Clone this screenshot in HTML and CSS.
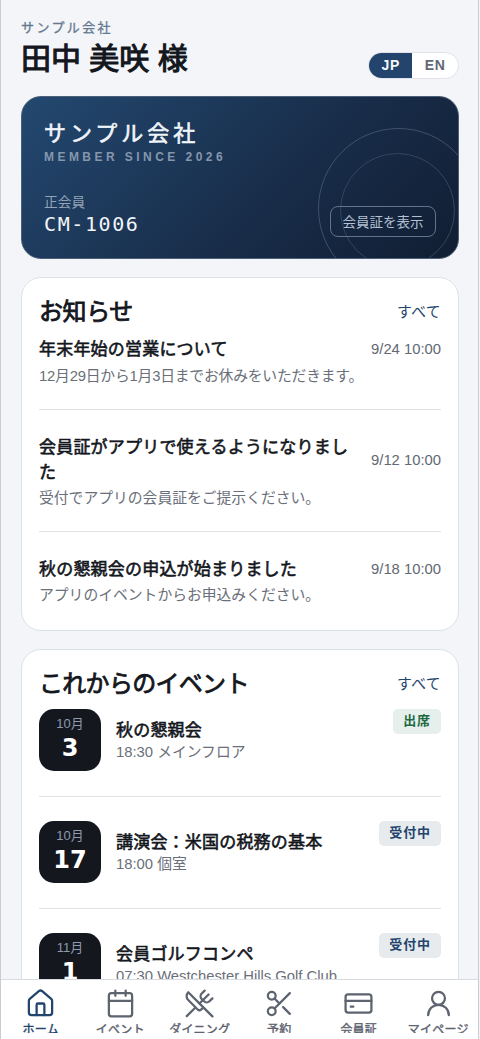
FILE: index.html
```html
<!DOCTYPE html>
<html lang="ja">
<head>
<meta charset="utf-8">
<meta name="viewport" content="width=device-width, initial-scale=1">
<title>サンプル会社</title>
<link rel="stylesheet" href="styles.css">
</head>
<body>
<div class="app">
  <main class="content">
    <header class="header">
      <div>
        <div class="company">サンプル会社</div>
        <h1 class="greeting">田中 美咲 様</h1>
      </div>
      <div class="lang"><span class="lang-item active">JP</span><span class="lang-item">EN</span></div>
    </header>

    <section class="member-card">
      <div class="ring ring-outer"></div>
      <div class="ring ring-inner"></div>
      <div>
        <div class="card-title">サンプル会社</div>
        <div class="card-since">MEMBER SINCE 2026</div>
      </div>
      <div class="card-bottom">
        <div>
          <div class="card-type">正会員</div>
          <div class="card-number">CM-1006</div>
        </div>
        <button class="card-button">会員証を表示</button>
      </div>
    </section>

    <section class="panel">
      <div class="panel-head"><h2>お知らせ</h2><a class="all">すべて</a></div>
      <article class="news">
        <div class="news-top"><h3>年末年始の営業について</h3><time>9/24 10:00</time></div>
        <p>12月29日から1月3日までお休みをいただきます。</p>
      </article>
      <article class="news">
        <div class="news-top"><h3>会員証がアプリで使えるようになりました</h3><time>9/12 10:00</time></div>
        <p>受付でアプリの会員証をご提示ください。</p>
      </article>
      <article class="news">
        <div class="news-top"><h3>秋の懇親会の申込が始まりました</h3><time>9/18 10:00</time></div>
        <p>アプリのイベントからお申込みください。</p>
      </article>
    </section>

    <section class="panel">
      <div class="panel-head"><h2 class="tight">これからのイベント</h2><a class="all">すべて</a></div>
      <article class="event">
        <div class="date"><span class="month">10月</span><span class="day">3</span></div>
        <div class="event-body"><h3>秋の懇親会</h3><p>18:30 メインフロア</p></div>
        <span class="badge going">出席</span>
      </article>
      <article class="event">
        <div class="date"><span class="month">10月</span><span class="day">17</span></div>
        <div class="event-body"><h3>講演会：米国の税務の基本</h3><p>18:00 個室</p></div>
        <span class="badge">受付中</span>
      </article>
      <article class="event">
        <div class="date"><span class="month">11月</span><span class="day">1</span></div>
        <div class="event-body"><h3>会員ゴルフコンペ</h3><p>07:30 Westchester Hills Golf Club</p></div>
        <span class="badge">受付中</span>
      </article>
    </section>
  </main>

  <nav class="tabs">
    <a class="tab active">
      <svg viewBox="0 0 24 24"><path d="M15 21v-8a1 1 0 0 0-1-1h-4a1 1 0 0 0-1 1v8"/><path d="M3 10a2 2 0 0 1 .709-1.528l7-5.999a2 2 0 0 1 2.582 0l7 5.999A2 2 0 0 1 21 10v9a2 2 0 0 1-2 2H5a2 2 0 0 1-2-2z"/></svg>
      <span>ホーム</span>
    </a>
    <a class="tab">
      <svg viewBox="0 0 24 24"><path d="M8 2v4M16 2v4"/><rect x="3" y="4" width="18" height="18" rx="2"/><path d="M3 10h18"/></svg>
      <span>イベント</span>
    </a>
    <a class="tab">
      <svg viewBox="0 0 24 24"><path d="m16 2-2.3 2.3a3 3 0 0 0 0 4.2l1.8 1.8a3 3 0 0 0 4.2 0L22 8"/><path d="M15 15 3.3 3.3a4.2 4.2 0 0 0 0 6l7.3 7.3c.7.7 2 .7 2.8 0L15 15Zm0 0 7 7"/><path d="m2.1 21.8 6.4-6.3"/><path d="m19 5-7 7"/></svg>
      <span>ダイニング</span>
    </a>
    <a class="tab">
      <svg viewBox="0 0 24 24"><circle cx="6" cy="6" r="3"/><path d="M8.12 8.12 12 12"/><path d="M20 4 8.12 15.88"/><circle cx="6" cy="18" r="3"/><path d="M14.8 14.8 20 20"/></svg>
      <span>予約</span>
    </a>
    <a class="tab">
      <svg viewBox="0 0 24 24"><rect x="2" y="5" width="20" height="14" rx="2"/><path d="M2 10h20M6 14.5h2"/></svg>
      <span>会員証</span>
    </a>
    <a class="tab">
      <svg viewBox="0 0 24 24"><circle cx="12" cy="8" r="5"/><path d="M20 21a8 8 0 0 0-16 0"/></svg>
      <span>マイページ</span>
    </a>
  </nav>
</div>
</body>
</html>
```
FILE: styles.css
```css
* { box-sizing: border-box; }
body {
  margin: 0;
  background: #f3f5f8;
  font-family: "Liberation Sans", "Noto Sans CJK JP", sans-serif;
  color: #14171d;
}
h1, h2, h3, p { margin: 0; }

.app {
  display: flex;
  flex-direction: column;
  width: 479px;
  height: 1039px;
  overflow: hidden;
  border: solid #c9ccd3;
  border-width: 0 1px;
}
.content {
  flex: 1;
  min-height: 0;
  overflow: hidden;
  display: flex;
  flex-direction: column;
  gap: 18px;
  padding: 18px 19px 0 20px;
}
.content > * { flex-shrink: 0; }

.header { display: flex; justify-content: space-between; align-items: flex-start; height: 60px; }
.company { font-size: 13px; line-height: 20px; letter-spacing: 2.4px; color: #64798f; -webkit-text-stroke: .3px; }
.greeting { font-size: 30px; line-height: 42px; font-weight: 400; -webkit-text-stroke: 1.1px; }
.lang { display: flex; height: 27px; width: 91px; margin-top: 34px; border: 1px solid #dfe2e8; border-radius: 14px; overflow: hidden; background: #fff; }
.lang-item { flex: 1 0 auto; text-align: center; font-size: 14px; font-weight: 700; line-height: 24px; letter-spacing: .7px; color: #626874; }
.lang-item.active { background: #23446d; color: #f4f7fb; }

.member-card {
  position: relative;
  height: 163px;
  padding: 22px 22px 21px;
  border: 1px solid #4b5f78;
  border-radius: 20px;
  overflow: hidden;
  background: linear-gradient(135deg, #234870 0%, #182c48 60%, #111e33 100%);
  color: #f1f5fa;
  display: flex;
  flex-direction: column;
  justify-content: space-between;
}
.ring { position: absolute; border: 1px solid #40526b; border-radius: 50%; }
.ring-outer { width: 161px; height: 161px; right: -21px; bottom: -31px; }
.ring-inner { width: 115px; height: 115px; right: 3px; bottom: -10px; border-color: #34465f; }
.card-title { font-size: 22px; line-height: 30px; letter-spacing: 3.96px; -webkit-text-stroke: .6px; }
.card-since { font-size: 12px; line-height: 16px; letter-spacing: 3.45px; font-weight: 700; color: #8597ad; }
.card-bottom { display: flex; justify-content: space-between; align-items: flex-end; }
.card-type { font-size: 13.7px; line-height: 19px; color: #93a3b6; }
.card-number { font-family: "DejaVu Sans Mono", monospace; font-size: 20px; line-height: 25px; letter-spacing: 1.6px; }
.card-button {
  position: relative;
  width: 106px;
  height: 31px;
  padding: 0 0 2px;
  border: 1px solid #62748c;
  border-radius: 8px;
  background: none;
  color: #b3c1d2;
  font: 13.5px "Liberation Sans", "Noto Sans CJK JP", sans-serif;
}

.panel { padding: 17px 17px; border: 1px solid #dde1e8; border-radius: 20px; background: #fff; }
.panel-head { display: flex; justify-content: space-between; align-items: center; height: 33px; }
.panel-head h2 { font-size: 24px; line-height: 32px; letter-spacing: -.4px; font-weight: 400; -webkit-text-stroke: .8px; }
.panel-head .tight { letter-spacing: -.7px; }
.all { font-size: 14.8px; line-height: 20px; letter-spacing: .4px; color: #23446d; }

.news { padding: 25px 0 21px; border-top: 1px solid #dfe2e7; }
.panel-head + .news { padding: 9px 0 21px; border-top: 0; }
.news:last-child { padding-bottom: 6px; }
.news-top { display: flex; justify-content: space-between; align-items: center; gap: 16px; }
h3 { font-size: 17px; line-height: 25px; letter-spacing: .2px; font-weight: 400; -webkit-text-stroke: .6px; }
time { font-size: 14.8px; line-height: 18px; padding-bottom: 1px; color: #626874; white-space: nowrap; }
.news p { font-size: 14.8px; line-height: 23px; margin-top: 2px; color: #6a6f79; }
.panel-head + .news p { margin-top: 3px; letter-spacing: -.2px; }

.event { display: flex; align-items: flex-start; gap: 15px; padding: 24px 0 25px; border-top: 1px solid #dfe2e7; }
.panel-head + .event { padding-top: 9px; border-top: 0; }
.date {
  width: 62px;
  height: 62px;
  border-radius: 15px;
  background: #14171d;
  display: flex;
  flex-direction: column;
  align-items: center;
  padding-top: 5px;
}
.month { font-size: 13px; line-height: 19px; color: #8d9ab0; }
.day { font-family: "DejaVu Sans", sans-serif; font-size: 24px; line-height: 30px; font-weight: 700; color: #fff; }
.event-body { flex: 1; padding-top: 9px; }
.event-body h3 { line-height: 25px; }
.event-body p { font-size: 14.8px; line-height: 19px; color: #6a6f79; white-space: nowrap; }
.badge { height: 25px; padding: 0 10px; border-radius: 5px; background: #e8ebee; color: #23446d; font-size: 13px; line-height: 24px; font-weight: 700; letter-spacing: .9px; }
.badge.going { background: #e6efeb; color: #216a43; }

.tabs {
  flex: none;
  display: grid;
  grid-template-columns: repeat(6, 1fr);
  height: 60px;
  padding-top: 8px;
  background: #fff;
  border-top: 1px solid #d8dbe1;
}
.tab { display: flex; flex-direction: column; align-items: center; height: 45px; overflow: hidden; color: #5d636f; }
.tab.active { color: #23446d; }
.tab svg { flex: none; width: 31px; height: 31px; fill: none; stroke: currentColor; stroke-width: 1.75; stroke-linecap: round; stroke-linejoin: round; }
.tab span { margin-top: 2px; font-size: 12px; line-height: 18px; letter-spacing: .24px; -webkit-text-stroke: .4px; white-space: nowrap; }
```
